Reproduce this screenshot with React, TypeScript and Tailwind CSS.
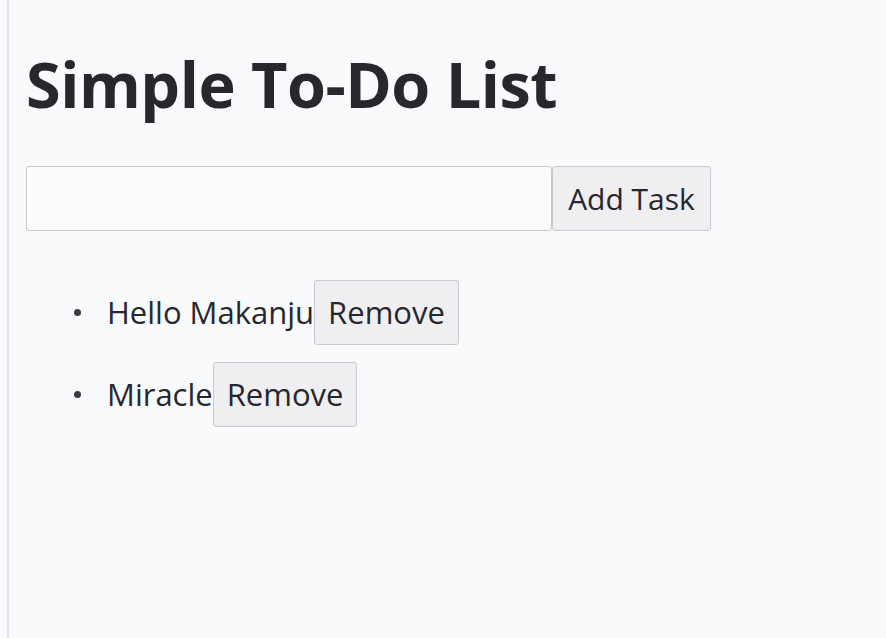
import { useState } from "react"

export default function App() {
  const [tasks, setTasks] = useState<string[]>(["Hello Makanju", "Miracle"])
  const [text, setText] = useState("")

  const add = () => {
    if (!text.trim()) return
    setTasks([...tasks, text.trim()])
    setText("")
  }

  return (
    <div className="h-[638px] w-[886px] overflow-hidden bg-[#f9fafc] pl-[7px] font-['Open_Sans',sans-serif] text-[#28272e]">
      <div className="h-full border-l-2 border-[#e1e2e6] pl-[17px]">
        <h1 className="pt-[44px] pb-[2px] text-[63px] leading-[80px] font-bold tracking-[-0.5px]">Simple To-Do List</h1>

        {/* input row */}
        <div className="mt-[40px] flex">
          <input
            value={text}
            onChange={(e) => setText(e.target.value)}
            className="h-[65px] w-[526px] rounded-[3px] border border-[#c8c9cc] bg-[#fcfcfd] px-3 text-[30px] outline-none"
          />
          <button
            onClick={add}
            className="h-[65px] w-[159px] rounded-[3px] border border-[#c8c9cc] bg-[#efeff1] text-[30px]"
          >
            Add Task
          </button>
        </div>

        <ul className="mt-[49px] pl-[48px] text-[31px]">
          {tasks.map((t, i) => (
            <li key={i} className="mb-[17px] flex items-center">
              <span className="mr-[26px] h-[7px] w-[7px] rounded-full bg-[#3a3a42]" />
              {t}
              <button
                onClick={() => setTasks(tasks.filter((_, j) => j !== i))}
                className="h-[65px] rounded-[3px] border border-[#c8c9cc] bg-[#efeff1] px-[13px]"
              >
                Remove
              </button>
            </li>
          ))}
        </ul>
      </div>
    </div>
  )
}
